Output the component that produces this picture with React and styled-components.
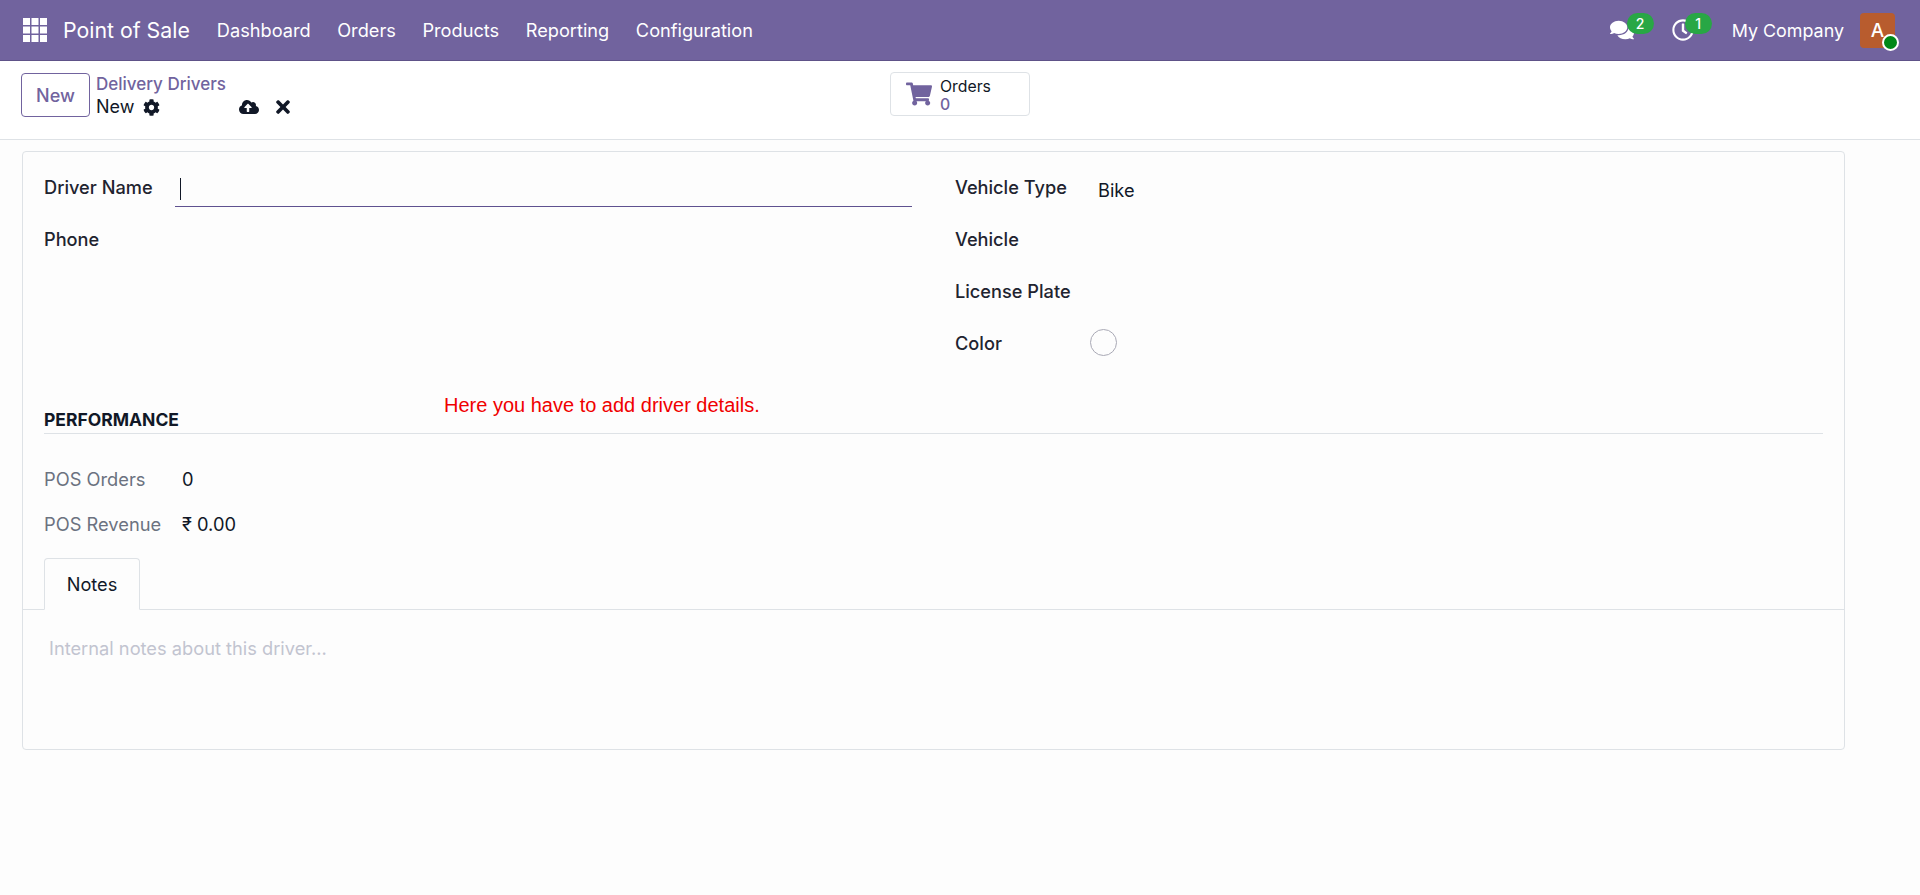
import React from 'react';
import styled, { createGlobalStyle } from 'styled-components';
import { FaCog, FaCloudUploadAlt, FaTimes, FaShoppingCart, FaComments, FaRegClock } from 'react-icons/fa';

const GlobalStyle = createGlobalStyle`
  html, body {
    margin: 0;
    height: 100%;
    background: #fdfdfd;
    font-family: Inter, "Noto Sans", sans-serif;
    color: #111827;
  }
`;

const Page = styled.div`
  height: 895px;
  overflow: hidden;
`;

const NavBar = styled.header`
  height: 60px;
  background: #71639e;
  border-bottom: 1px solid #5e5288;
  box-shadow: 0 1px 0 #b9b1d1;
  display: flex;
  align-items: center;
  padding: 0 22px 0 23px;
  color: #fff;
`;

const AppsGrid = styled.svg`
  width: 24px;
  height: 24px;
  margin-right: 16px;
  fill: #fff;
`;

const Brand = styled.div`
  font-size: 21.3px;
  margin-right: 27px;
  white-space: nowrap;
`;

const NavLink = styled.a`
  font-size: 18.2px;
  margin-right: 26.6px;
  white-space: nowrap;
`;

const NavRight = styled.div`
  margin-left: auto;
  display: flex;
  align-items: center;
  font-size: 17.9px;
`;

const Systray = styled.div`
  position: relative;
  width: 24px;
  height: 24px;
  margin-right: ${(p) => p.$gap}px;
  display: flex;
  align-items: center;
  font-size: ${(p) => p.$size}px;
`;

const Badge = styled.span`
  position: absolute;
  left: ${(p) => p.$left}px;
  top: -5px;
  width: 27px;
  height: 21px;
  border-radius: 11px;
  background: #28a745;
  font-size: 14px;
  font-weight: 500;
  display: flex;
  align-items: center;
  justify-content: center;
`;

const Avatar = styled.div`
  position: relative;
  width: 35px;
  height: 35px;
  margin-left: 16px;
  margin-right: 3px;
  border-radius: 4px;
  background: #b85c2e;
  font-size: 19px;
  font-weight: 500;
  display: flex;
  align-items: center;
  justify-content: center;
`;

const OnlineDot = styled.span`
  position: absolute;
  right: -4px;
  bottom: -3px;
  width: 13px;
  height: 13px;
  border-radius: 50%;
  background: #008818;
  border: 2px solid #fff;
`;

const ControlPanel = styled.section`
  height: 79px;
  box-sizing: border-box;
  border-bottom: 1px solid #dee2e6;
  display: grid;
  grid-template-columns: 869px 1fr;
  padding-left: 21px;
  background: #fff;
`;

const Left = styled.div`
  display: flex;
  align-items: flex-start;
  padding-top: 12px;
`;

const NewButton = styled.button`
  width: 69px;
  height: 44px;
  box-sizing: border-box;
  background: #fff;
  border: 1px solid #71639e;
  border-radius: 4px;
  color: #71639e;
  font: 500 18px Inter, sans-serif;
  margin-right: 6px;
  padding: 0;
`;

const Breadcrumb = styled.div`
  display: flex;
  flex-direction: column;
`;

const Parent = styled.a`
  font-size: 17px;
  font-weight: 500;
  color: #71639e;
  line-height: 22px;
`;

const CurrentRow = styled.div`
  display: flex;
  align-items: center;
  font-size: 18px;
  line-height: 24px;
`;

const GearIcon = styled(FaCog)`
  font-size: 17px;
  margin-left: 9px;
`;

const CloudIcon = styled(FaCloudUploadAlt)`
  font-size: 20px;
  margin-left: 79px;
`;

const CloseIcon = styled(FaTimes)`
  font-size: 20px;
  margin-left: 14px;
`;

const StatButton = styled.div`
  width: 140px;
  height: 44px;
  box-sizing: border-box;
  margin-top: 11px;
  border: 1px solid #dee2e6;
  border-radius: 4px;
  display: flex;
  align-items: center;
  padding-left: 15px;
`;

const CartIcon = styled(FaShoppingCart)`
  color: #71639e;
  font-size: 26px;
  margin-right: 8px;
`;

const StatText = styled.div`
  font-size: 15.8px;
  line-height: 18px;
  padding-top: 3px;
`;

const StatValue = styled.div`
  color: #71639e;
  font-weight: 500;
`;

const Sheet = styled.main`
  position: relative;
  width: 1823px;
  height: 599px;
  box-sizing: border-box;
  margin: 11px 0 0 22px;
  border: 1px solid #dee2e6;
  border-radius: 4px;
  background: #fdfdfd;
  padding: 0 21px;
`;

const Columns = styled.div`
  display: grid;
  grid-template-columns: 911px 1fr;
  padding-top: 17px;
  height: 257px;
  box-sizing: border-box;
`;

const Column = styled.div`
  display: flex;
  flex-direction: column;
`;

const Row = styled.div`
  display: flex;
  height: 52px;
  padding-top: 6px;
  box-sizing: border-box;
  align-items: flex-start;
`;

const Label = styled.label`
  width: ${(p) => p.$w}px;
  flex: none;
  font-size: 18.2px;
  font-weight: 500;
  line-height: 24px;
  color: #1f2430;
`;

const NameInput = styled.div`
  width: 737px;
  height: 34px;
  margin-top: -2px;
  box-sizing: border-box;
  border-bottom: 1px solid #5f5290;
  padding: 5px 0 0 5px;
`;

const Caret = styled.div`
  width: 1px;
  height: 22px;
  background: #111827;
`;

const Value = styled.span`
  font-size: 18.2px;
  line-height: 24px;
  margin-top: 3px;
`;

const ColorDot = styled.div`
  width: 27px;
  height: 27px;
  box-sizing: border-box;
  margin-left: -8px;
  margin-top: -2px;
  border: 1px solid #a9a9b5;
  border-radius: 50%;
`;

const Annotation = styled.div`
  position: absolute;
  left: 421px;
  top: 242px;
  font: 20px "Liberation Sans", Arial, sans-serif;
  color: #f00000;
`;

const SectionTitle = styled.h3`
  margin: 0;
  padding-bottom: 2px;
  font-size: 17.5px;
  line-height: 22px;
  font-weight: 700;
  color: #111827;
  border-bottom: 1px solid #dee2e6;
`;

const Stats = styled.div`
  display: grid;
  grid-template-columns: 138px 1fr;
  grid-auto-rows: 45.5px;
  align-items: center;
  padding-top: 22px;
  font-size: 18.3px;
`;

const StatLabel = styled.div`
  color: #6b7280;
`;

const Tabs = styled.div`
  margin: 11px -21px 0;
  padding-left: 21px;
  height: 52px;
  box-sizing: border-box;
  border-bottom: 1px solid #dee2e6;
`;

const Tab = styled.div`
  width: 96px;
  height: 52px;
  box-sizing: border-box;
  border: 1px solid #dee2e6;
  border-bottom: 1px solid #fdfdfd;
  border-radius: 4px 4px 0 0;
  display: flex;
  align-items: center;
  justify-content: center;
  font-size: 18.2px;
`;

const Notes = styled.div`
  padding: 26px 0 0 5px;
  font-size: 18.25px;
  line-height: 24px;
  color: #c2c4d0;
`;

const navItems = ['Dashboard', 'Orders', 'Products', 'Reporting', 'Configuration'];
const appSquares = [0, 1, 2].flatMap((y) => [0, 1, 2].map((x) => [x * 8.5, y * 8.5]));

export default function App() {
  return (
    <Page>
      <GlobalStyle />
      <NavBar>
        <AppsGrid viewBox="0 0 24 24">
          {appSquares.map(([x, y]) => (
            <rect key={`${x}-${y}`} x={x} y={y} width="7" height="7" />
          ))}
        </AppsGrid>
        <Brand>Point of Sale</Brand>
        {navItems.map((item) => (
          <NavLink key={item}>{item}</NavLink>
        ))}
        <NavRight>
          <Systray $gap={38} $size={24}>
            <FaComments />
            <Badge $left={17}>2</Badge>
          </Systray>
          <Systray $gap={36} $size={22}>
            <FaRegClock />
            <Badge $left={13}>1</Badge>
          </Systray>
          My Company
          <Avatar>
            A
            <OnlineDot />
          </Avatar>
        </NavRight>
      </NavBar>
      <ControlPanel>
        <Left>
          <NewButton>New</NewButton>
          <Breadcrumb>
            <Parent>Delivery Drivers</Parent>
            <CurrentRow>
              New
              <GearIcon />
              <CloudIcon />
              <CloseIcon />
            </CurrentRow>
          </Breadcrumb>
        </Left>
        <StatButton>
          <CartIcon />
          <StatText>
            Orders
            <StatValue>0</StatValue>
          </StatText>
        </StatButton>
      </ControlPanel>
      <Sheet>
        <Columns>
          <Column>
            <Row>
              <Label $w={131}>Driver Name</Label>
              <NameInput>
                <Caret />
              </NameInput>
            </Row>
            <Row>
              <Label $w={131}>Phone</Label>
            </Row>
          </Column>
          <Column>
            <Row>
              <Label $w={143}>Vehicle Type</Label>
              <Value>Bike</Value>
            </Row>
            <Row>
              <Label $w={143}>Vehicle</Label>
            </Row>
            <Row>
              <Label $w={143}>License Plate</Label>
            </Row>
            <Row>
              <Label $w={143}>Color</Label>
              <ColorDot />
            </Row>
          </Column>
        </Columns>
        <Annotation>Here you have to add driver details.</Annotation>
        <SectionTitle>PERFORMANCE</SectionTitle>
        <Stats>
          <StatLabel>POS Orders</StatLabel>
          <div>0</div>
          <StatLabel>POS Revenue</StatLabel>
          <div>₹ 0.00</div>
        </Stats>
        <Tabs>
          <Tab>Notes</Tab>
        </Tabs>
        <Notes>Internal notes about this driver...</Notes>
      </Sheet>
    </Page>
  );
}
